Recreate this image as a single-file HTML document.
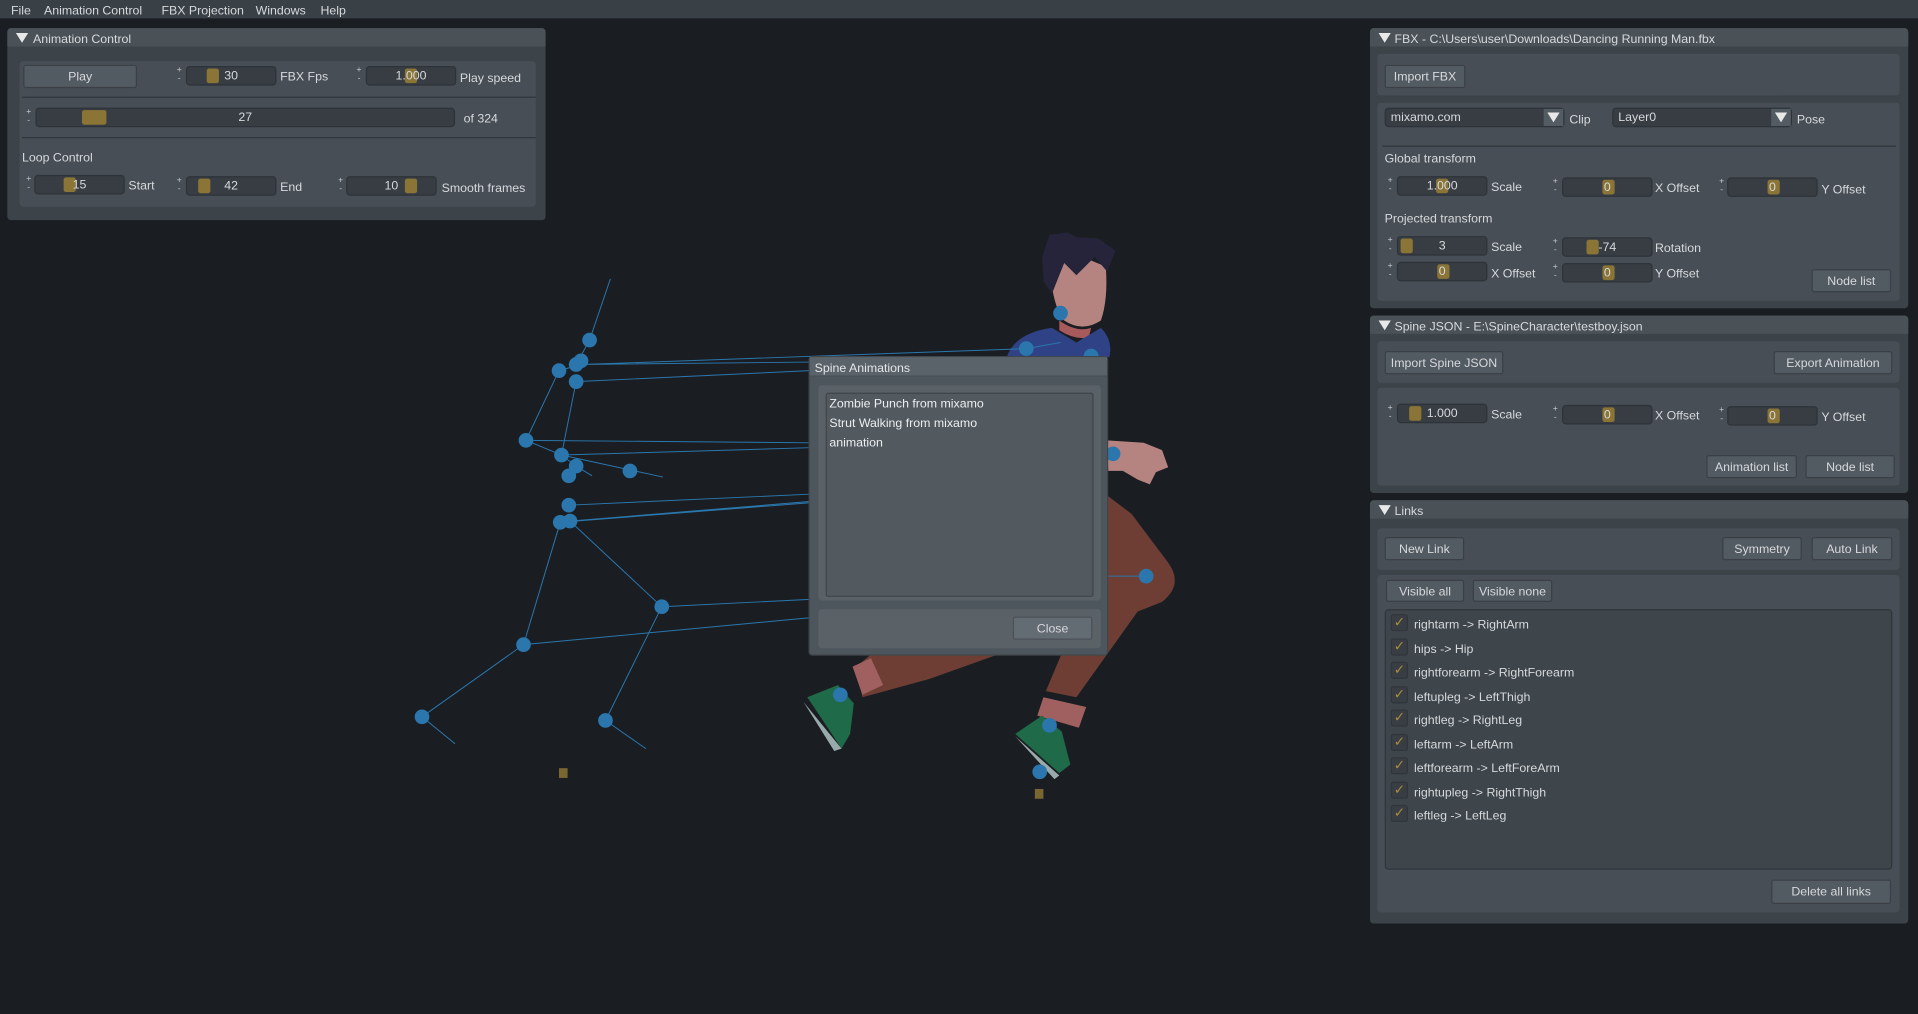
<!DOCTYPE html>
<html><head><meta charset="utf-8"><style>
*{box-sizing:border-box;margin:0;padding:0}
html,body{width:1918px;height:1014px;overflow:hidden;background:#1a1e23}
#w{position:absolute;left:0;top:0;width:1568px;height:829px;transform:scale(1.22321);transform-origin:0 0;font-family:"Liberation Sans",sans-serif;font-size:10.1px;color:#d6d9dc}
.a{position:absolute}
.t{position:absolute;white-space:nowrap;line-height:14px;padding-top:1.5px}
.menu{left:0;top:0;width:1568px;height:15px;background:#3a4146}
.pn{position:absolute;background:#3c4349;border-radius:3px}
.hd{position:absolute;left:0;top:0;right:0;height:15px;background:#4a5258;border-radius:3px 3px 0 0}
.gr{position:absolute;background:#474e55;border-radius:3px}
.btn{position:absolute;background:#535b62;border:1px solid #3a4045;border-radius:2px;text-align:center;line-height:18px;padding-top:1px;color:#d6d9dc}
.fld{position:absolute;background:#373d43;border:1px solid #2d3338;border-radius:3px;height:16px;text-align:center;line-height:15px}
.gb{position:absolute;top:1px;height:12px;width:10px;background:#8a7436;border-radius:2px}
.pm{position:absolute;width:7px;font-size:7px;line-height:7px;text-align:center;color:#c8ccd0}
.sep{position:absolute;height:1px;background:#30363b}
.tri{position:absolute;width:0;height:0;border-left:5px solid transparent;border-right:5px solid transparent;border-top:8px solid #e8e8e8}
.cb{position:absolute;width:14px;height:14px;background:#383e44;border:1px solid #30363b;border-radius:2px;color:#a88d3c;font-size:11px;line-height:12px;text-align:center}
</style></head><body><div id="w">
<div class="a menu"></div>
<div class="t" style="left:9px;top:1px">File</div>
<div class="t" style="left:36px;top:1px">Animation Control</div>
<div class="t" style="left:132px;top:1px">FBX Projection</div>
<div class="t" style="left:209px;top:1px">Windows</div>
<div class="t" style="left:262px;top:1px">Help</div>

<svg class="a" style="left:0;top:0" width="1568" height="829">
<path d="M858 215 Q860 250 870 262 Q885 272 900 262 Q906 245 904 218 L885 210 Z" fill="#b68480"/>
<path d="M852 210 L858 192 L873 190 L880 194 L898 195 L912 205 L905 222 L895 210 L880 225 L870 215 L860 240 L853 230 Z" fill="#25243a"/>
<path d="M866 262 Q880 272 892 268 L890 276 Q878 278 866 270 Z" fill="#a65a5c"/>
<path d="M823 292 Q830 272 860 268 L880 280 L900 268 Q910 278 907 292 Z" fill="#2f4285"/>
<path d="M905 360 L935 362 L950 368 L955 382 L945 386 L940 396 L930 392 L918 385 L906 385 Z" fill="#b68480"/>
<path d="M905 405 L925 420 L955 460 Q968 478 950 492 L930 500 L880 570 L855 565 L895 470 L905 440 Z" fill="#6e3e34"/>
<path d="M700 545 L730 520 L800 500 L880 480 L900 505 L760 555 L705 570 Z" fill="#6e3e34"/>
<path d="M697 545 L712 538 L722 560 L705 568 Z" fill="#a06060"/>
<path d="M853 570 L888 578 L882 595 L848 585 Z" fill="#a06060"/>
<path d="M660 570 L685 560 L698 575 L695 600 L688 612 Z" fill="#1f6a48"/>
<path d="M657 574 L688 612 L682 614 Z" fill="#9aa"/>
<path d="M830 600 L852 585 L868 598 L875 625 L866 632 Z" fill="#1f6a48"/>
<path d="M830 602 L866 634 L862 637 Z" fill="#9aa"/>
<g stroke="#2b77ad" stroke-width="0.8" fill="none">
<path d="M499 228 L482 278 L471 298 M457 303 L430 360 M471 312 L459 372 M430 360 L459 372 L471 381 L465 389 M459 372 L542 390 M471 381 L484 389"/>
<path d="M475 298 L840 285 M471 298 L662 296 M471 312 L662 303 M457 303 L475 298 M430 360 L662 362 M459 372 L662 366 M465 413 L662 404 M466 426 L662 410 M458 427 L662 411"/>
<path d="M458 427 L428 527 L345 586 L372 608 M466 426 L541 496 L495 589 L528 612 M541 496 L662 490 M428 527 L662 505"/>
<path d="M839 285 L867 280 M906 471 L937 471"/>
</g>
<g fill="#2b77ad">
<circle cx="482" cy="278" r="6"/><circle cx="475" cy="295" r="6"/><circle cx="471" cy="298" r="6"/><circle cx="457" cy="303" r="6"/><circle cx="471" cy="312" r="6"/><circle cx="430" cy="360" r="6"/><circle cx="459" cy="372" r="6"/><circle cx="471" cy="381" r="6"/><circle cx="465" cy="389" r="6"/><circle cx="515" cy="385" r="6"/><circle cx="465" cy="413" r="6"/><circle cx="458" cy="427" r="6"/><circle cx="466" cy="426" r="6"/><circle cx="541" cy="496" r="6"/><circle cx="428" cy="527" r="6"/><circle cx="345" cy="586" r="6"/><circle cx="495" cy="589" r="6"/>
<circle cx="867" cy="256" r="6"/><circle cx="839" cy="285" r="6"/><circle cx="892" cy="291" r="6"/><circle cx="910" cy="371" r="6"/><circle cx="937" cy="471" r="6"/><circle cx="687" cy="568" r="6"/><circle cx="858" cy="593" r="6"/><circle cx="850" cy="631" r="6"/>
</g>
<rect x="457" y="628" width="7" height="8" fill="#7a6630"/><rect x="846" y="645" width="7" height="8" fill="#7a6630"/>
</svg>

<div class="pn" style="left:6px;top:23px;width:440px;height:157px">
<div class="hd"></div><div class="tri" style="left:7px;top:4px"></div><div class="t" style="left:21px;top:1px">Animation Control</div>
<div class="gr" style="left:10px;top:27px;width:422px;height:119px"></div>
</div>
<div class="btn" style="left:19px;top:53px;width:93px;height:19px;line-height:17px">Play</div>
<div class="pm" style="left:143px;top:54px">+<br>-</div><div class="fld" style="left:152px;top:54px;width:74px"><div class="gb" style="left:16px"></div><span style="position:relative">30</span></div><div class="t" style="left:229px;top:55px">FBX Fps</div>
<div class="pm" style="left:290px;top:54px">+<br>-</div><div class="fld" style="left:299px;top:54px;width:74px"><div class="gb" style="left:31px"></div><span style="position:relative">1.000</span></div><div class="t" style="left:376px;top:56px">Play speed</div>
<div class="sep" style="left:18px;top:79px;width:420px"></div>
<div class="pm" style="left:20px;top:88px">+<br>-</div><div class="fld" style="left:29px;top:88px;width:343px"><div class="gb" style="left:37px;width:20px"></div><span style="position:relative">27</span></div><div class="t" style="left:379px;top:89px">of 324</div>
<div class="sep" style="left:18px;top:112px;width:420px"></div>
<div class="t" style="left:18px;top:121px">Loop Control</div>
<div class="pm" style="left:20px;top:143px">+<br>-</div><div class="fld" style="left:28px;top:143px;width:74px"><div class="gb" style="left:23px"></div><span style="position:relative">15</span></div><div class="t" style="left:105px;top:144px">Start</div>
<div class="pm" style="left:143px;top:144px">+<br>-</div><div class="fld" style="left:152px;top:144px;width:74px"><div class="gb" style="left:9px"></div><span style="position:relative">42</span></div><div class="t" style="left:229px;top:145px">End</div>
<div class="pm" style="left:275px;top:144px">+<br>-</div><div class="fld" style="left:283px;top:144px;width:74px"><div class="gb" style="left:47px"></div><span style="position:relative">10</span></div><div class="t" style="left:361px;top:146px">Smooth frames</div>

<div class="pn" style="left:1120px;top:23px;width:440px;height:229px">
<div class="hd"></div><div class="tri" style="left:7px;top:4px"></div><div class="t" style="left:20px;top:1px">FBX - C:\Users\user\Downloads\Dancing Running Man.fbx</div>
<div class="gr" style="left:6px;top:21px;width:427px;height:34px"></div>
<div class="gr" style="left:6px;top:61px;width:427px;height:162px"></div>
</div>
<div class="btn" style="left:1132px;top:53px;width:66px;height:19px">Import FBX</div>
<div class="fld" style="left:1132px;top:88px;width:147px;text-align:left;padding-left:4px">mixamo.com<div class="a" style="right:0;top:0;width:16px;height:14px;background:#545c63"><div class="tri" style="left:3px;top:3px;border-width:8px 5px 0 5px"></div></div></div><div class="t" style="left:1283px;top:90px">Clip</div>
<div class="fld" style="left:1318px;top:88px;width:147px;text-align:left;padding-left:4px">Layer0<div class="a" style="right:0;top:0;width:16px;height:14px;background:#545c63"><div class="tri" style="left:3px;top:3px;border-width:8px 5px 0 5px"></div></div></div><div class="t" style="left:1469px;top:90px">Pose</div>
<div class="sep" style="left:1130px;top:119px;width:420px"></div>
<div class="t" style="left:1132px;top:122px">Global transform</div>
<div class="pm" style="left:1133px;top:144px">+<br>-</div><div class="fld" style="left:1142px;top:144px;width:74px"><div class="gb" style="left:31px"></div><span style="position:relative">1.000</span></div><div class="t" style="left:1219px;top:145px">Scale</div>
<div class="pm" style="left:1268px;top:145px">+<br>-</div><div class="fld" style="left:1277px;top:145px;width:74px"><div class="gb" style="left:32px"></div><span style="position:relative">0</span></div><div class="t" style="left:1353px;top:146px">X Offset</div>
<div class="pm" style="left:1404px;top:145px">+<br>-</div><div class="fld" style="left:1412px;top:145px;width:74px"><div class="gb" style="left:32px"></div><span style="position:relative">0</span></div><div class="t" style="left:1489px;top:147px">Y Offset</div>
<div class="t" style="left:1132px;top:171px">Projected transform</div>
<div class="pm" style="left:1133px;top:193px">+<br>-</div><div class="fld" style="left:1142px;top:193px;width:74px"><div class="gb" style="left:2px"></div><span style="position:relative">3</span></div><div class="t" style="left:1219px;top:194px">Scale</div>
<div class="pm" style="left:1268px;top:194px">+<br>-</div><div class="fld" style="left:1277px;top:194px;width:74px"><div class="gb" style="left:19px"></div><span style="position:relative">-74</span></div><div class="t" style="left:1353px;top:195px">Rotation</div>
<div class="pm" style="left:1133px;top:214px">+<br>-</div><div class="fld" style="left:1142px;top:214px;width:74px"><div class="gb" style="left:32px"></div><span style="position:relative">0</span></div><div class="t" style="left:1219px;top:216px">X Offset</div>
<div class="pm" style="left:1268px;top:215px">+<br>-</div><div class="fld" style="left:1277px;top:215px;width:74px"><div class="gb" style="left:32px"></div><span style="position:relative">0</span></div><div class="t" style="left:1353px;top:216px">Y Offset</div>
<div class="btn" style="left:1481px;top:220px;width:65px;height:19px">Node list</div>

<div class="pn" style="left:1120px;top:258px;width:440px;height:145px">
<div class="hd"></div><div class="tri" style="left:7px;top:4px"></div><div class="t" style="left:20px;top:1px">Spine JSON - E:\SpineCharacter\testboy.json</div>
<div class="gr" style="left:6px;top:21px;width:427px;height:34px"></div>
<div class="gr" style="left:6px;top:59px;width:427px;height:80px"></div>
</div>
<div class="btn" style="left:1132px;top:287px;width:97px;height:19px">Import Spine JSON</div>
<div class="btn" style="left:1450px;top:287px;width:97px;height:19px">Export Animation</div>
<div class="pm" style="left:1133px;top:330px">+<br>-</div><div class="fld" style="left:1142px;top:330px;width:74px"><div class="gb" style="left:9px"></div><span style="position:relative">1.000</span></div><div class="t" style="left:1219px;top:331px">Scale</div>
<div class="pm" style="left:1268px;top:331px">+<br>-</div><div class="fld" style="left:1277px;top:331px;width:74px"><div class="gb" style="left:32px"></div><span style="position:relative">0</span></div><div class="t" style="left:1353px;top:332px">X Offset</div>
<div class="pm" style="left:1404px;top:332px">+<br>-</div><div class="fld" style="left:1412px;top:332px;width:74px"><div class="gb" style="left:32px"></div><span style="position:relative">0</span></div><div class="t" style="left:1489px;top:333px">Y Offset</div>
<div class="btn" style="left:1395px;top:372px;width:74px;height:19px">Animation list</div>
<div class="btn" style="left:1476px;top:372px;width:73px;height:19px">Node list</div>

<div class="pn" style="left:1120px;top:409px;width:440px;height:346px">
<div class="hd"></div><div class="tri" style="left:7px;top:4px"></div><div class="t" style="left:20px;top:1px">Links</div>
<div class="gr" style="left:6px;top:23px;width:427px;height:34px"></div>
<div class="gr" style="left:6px;top:61px;width:427px;height:276px"></div>
</div>
<div class="btn" style="left:1132px;top:439px;width:65px;height:19px">New Link</div>
<div class="btn" style="left:1408px;top:439px;width:65px;height:19px">Symmetry</div>
<div class="btn" style="left:1481px;top:439px;width:66px;height:19px">Auto Link</div>
<div class="btn" style="left:1133px;top:474px;width:64px;height:18px;line-height:17px">Visible all</div>
<div class="btn" style="left:1204px;top:474px;width:65px;height:18px;line-height:17px">Visible none</div>
<div class="a" style="left:1132px;top:498px;width:415px;height:213px;background:#3e454b;border:1px solid #30363b;border-radius:3px"></div>
<div class="cb" style="left:1137px;top:502px">✓</div><div class="t" style="left:1156px;top:503px">rightarm -&gt; RightArm</div>
<div class="cb" style="left:1137px;top:522px">✓</div><div class="t" style="left:1156px;top:523px">hips -&gt; Hip</div>
<div class="cb" style="left:1137px;top:541px">✓</div><div class="t" style="left:1156px;top:542px">rightforearm -&gt; RightForearm</div>
<div class="cb" style="left:1137px;top:561px">✓</div><div class="t" style="left:1156px;top:562px">leftupleg -&gt; LeftThigh</div>
<div class="cb" style="left:1137px;top:580px">✓</div><div class="t" style="left:1156px;top:581px">rightleg -&gt; RightLeg</div>
<div class="cb" style="left:1137px;top:600px">✓</div><div class="t" style="left:1156px;top:601px">leftarm -&gt; LeftArm</div>
<div class="cb" style="left:1137px;top:619px">✓</div><div class="t" style="left:1156px;top:620px">leftforearm -&gt; LeftForeArm</div>
<div class="cb" style="left:1137px;top:639px">✓</div><div class="t" style="left:1156px;top:640px">rightupleg -&gt; RightThigh</div>
<div class="cb" style="left:1137px;top:658px">✓</div><div class="t" style="left:1156px;top:659px">leftleg -&gt; LeftLeg</div>
<div class="btn" style="left:1448px;top:719px;width:98px;height:20px">Delete all links</div>

<div class="a" style="left:661px;top:291px;width:245px;height:245px;background:#4e565d;border:1px solid #40474d;border-radius:3px">
<div class="a" style="left:0;top:0;right:0;height:16px;background:#5b636a;border-bottom:1px solid #474e54"></div>
<div class="t" style="left:4px;top:1px;color:#e4e6e8">Spine Animations</div>
<div class="a" style="left:7px;top:23px;width:231px;height:176px;background:#5a6268;border-radius:3px"></div>
<div class="a" style="left:13px;top:29px;width:219px;height:167px;background:#525a60;border:1px solid #3e454b;border-radius:2px"></div>
<div class="a" style="left:7px;top:206px;width:231px;height:32px;background:#5a6268;border-radius:3px"></div>
<div class="btn" style="left:166px;top:212px;width:65px;height:19px;background:#646c73;border-color:#4a5157">Close</div>
</div>
<div class="t" style="left:678px;top:322px;color:#eceef0">Zombie Punch from mixamo</div>
<div class="t" style="left:678px;top:338px;color:#eceef0">Strut Walking from mixamo</div>
<div class="t" style="left:678px;top:354px;color:#eceef0">animation</div>
</div></body></html>
